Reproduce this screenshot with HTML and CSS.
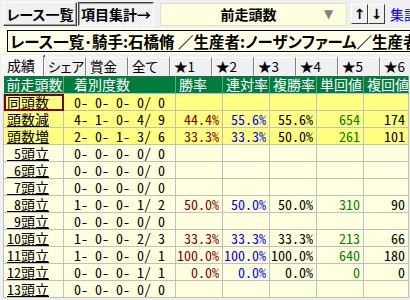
FILE: index.html
```html
<!DOCTYPE html>
<html lang="ja">
<head>
  <meta charset="UTF-8">
  <title>前走頭数 集計</title>
  <link rel="stylesheet" href="styles.css">
</head>
<body>

  <!-- toolbar -->
  <div class="toolbar">
    <button class="btn">レース一覧</button>
    <button class="btn toggled">項目集計→</button>
    <div class="combo">
      <span class="combo-text">前走頭数</span>
      <span class="combo-arrow">▼</span>
    </div>
    <div class="sort">
      <button class="arrow">↑</button>
      <button class="arrow">↓</button>
    </div>
    <a class="link" href="#">集計</a>
  </div>

  <!-- title -->
  <div class="titlebar">
    <div class="title">レース一覧･騎手:石橋脩 ／生産者:ノーザンファーム／生産者:ノーザンファーム</div>
  </div>

  <!-- tabs -->
  <div class="tabs">
    <div class="tab active">成績</div>
    <div class="tab">シェア</div>
    <div class="tab">賞金</div>
    <div class="tab">全て</div>
    <div class="tab">★1</div>
    <div class="tab">★2</div>
    <div class="tab">★3</div>
    <div class="tab">★4</div>
    <div class="tab">★5</div>
    <div class="tab">★6</div>
  </div>

  <!-- grid -->
  <div class="grid-wrap">
    <table class="grid">
      <colgroup>
        <col class="c-label"><col class="c-count"><col class="c-rate"><col class="c-rate"><col class="c-rate"><col class="c-rate"><col class="c-last">
      </colgroup>
      <thead>
        <tr>
          <th>前走頭数</th>
          <th class="pad">着別度数</th>
          <th>勝率</th>
          <th>連対率</th>
          <th>複勝率</th>
          <th>単回値</th>
          <th>複回値</th>
        </tr>
      </thead>
      <tbody>
        <tr class="hl">
          <td class="label selected"><span>同頭数</span></td>
          <td class="count">0- 0- 0- 0/ 0</td>
          <td></td><td></td><td></td><td></td><td></td>
        </tr>
        <tr class="hl">
          <td class="label"><span>頭数減</span></td>
          <td class="count">4- 1- 0- 4/ 9</td>
          <td class="win">44.4%</td><td class="ren">55.6%</td><td class="fuku">55.6%</td><td class="tan">654</td><td class="fk">174</td>
        </tr>
        <tr class="hl">
          <td class="label"><span>頭数増</span></td>
          <td class="count">2- 0- 1- 3/ 6</td>
          <td class="win">33.3%</td><td class="ren">33.3%</td><td class="fuku">50.0%</td><td class="tan">261</td><td class="fk">101</td>
        </tr>
        <tr>
          <td class="label"><span> 5頭立</span></td>
          <td class="count">0- 0- 0- 0/ 0</td>
          <td></td><td></td><td></td><td></td><td></td>
        </tr>
        <tr>
          <td class="label"><span> 6頭立</span></td>
          <td class="count">0- 0- 0- 0/ 0</td>
          <td></td><td></td><td></td><td></td><td></td>
        </tr>
        <tr>
          <td class="label"><span> 7頭立</span></td>
          <td class="count">0- 0- 0- 0/ 0</td>
          <td></td><td></td><td></td><td></td><td></td>
        </tr>
        <tr>
          <td class="label"><span> 8頭立</span></td>
          <td class="count">1- 0- 0- 1/ 2</td>
          <td class="win">50.0%</td><td class="ren">50.0%</td><td class="fuku">50.0%</td><td class="tan">310</td><td class="fk">90</td>
        </tr>
        <tr>
          <td class="label"><span> 9頭立</span></td>
          <td class="count">0- 0- 0- 0/ 0</td>
          <td></td><td></td><td></td><td></td><td></td>
        </tr>
        <tr>
          <td class="label"><span>10頭立</span></td>
          <td class="count">1- 0- 0- 2/ 3</td>
          <td class="win">33.3%</td><td class="ren">33.3%</td><td class="fuku">33.3%</td><td class="tan">213</td><td class="fk">66</td>
        </tr>
        <tr>
          <td class="label"><span>11頭立</span></td>
          <td class="count">1- 0- 0- 0/ 1</td>
          <td class="win">100.0%</td><td class="ren">100.0%</td><td class="fuku">100.0%</td><td class="tan">640</td><td class="fk">180</td>
        </tr>
        <tr>
          <td class="label"><span>12頭立</span></td>
          <td class="count">0- 0- 0- 1/ 1</td>
          <td class="win">0.0%</td><td class="ren">0.0%</td><td class="fuku">0.0%</td><td class="tan">0</td><td class="fk">0</td>
        </tr>
        <tr>
          <td class="label"><span>13頭立</span></td>
          <td class="count">0- 0- 0- 0/ 0</td>
          <td></td><td></td><td></td><td></td><td></td>
        </tr>
      </tbody>
    </table>
  </div>

</body>
</html>
```

FILE: styles.css
```css
body {
  margin: 0;
  width: 410px;
  height: 300px;
  overflow: hidden;
  background: #f0f0f0;
  font-family: "Noto Sans Mono CJK JP", "Noto Sans CJK JP", "Liberation Mono", monospace;
  font-size: 14px;
  color: #000;
}

/* toolbar */
.toolbar {
  display: flex;
  align-items: center;
  height: 28px;
  padding-left: 3px;
  white-space: nowrap;
}
.btn {
  flex: none;
  font-family: "Noto Sans CJK JP", sans-serif;
  font-feature-settings: "palt";
  font-size: 14px;
  font-weight: bold;
  width: 74px;
  height: 24px;
  padding: 0;
  background: #f0f0f0;
  border: 1px solid;
  border-color: #fff #404040 #404040 #fff;
  box-shadow: inset -1px -1px 0 #a0a0a0;
  line-height: 20px;
  white-space: nowrap;
}
.btn.toggled {
  width: 76px;
  margin-left: 1px;
  border-color: #404040 #fff #fff #404040;
  box-shadow: inset 1px 1px 0 #a0a0a0;
  background-color: #fff;
  background-image: repeating-conic-gradient(#e6e6e6 0 25%, #fff 0 50%);
  background-size: 2px 2px;
}
.combo {
  flex: none;
  display: flex;
  align-items: center;
  width: 185px;
  height: 21px;
  margin-left: 6px;
  background: #ffffe0;
  border: 1px solid #e0e0c8;
}
.combo-text {
  flex: 1;
  text-align: center;
  font-family: "Noto Sans CJK JP", sans-serif;
  font-weight: bold;
  font-size: 14px;
  padding-left: 12px;
}
.combo-arrow {
  color: #808080;
  font-family: "DejaVu Sans", sans-serif;
  font-size: 12px;
  width: 22px;
}
.sort {
  flex: none;
  display: flex;
  margin-left: 4px;
}
.arrow {
  width: 17px;
  height: 20px;
  padding: 0;
  font-family: "DejaVu Sans", sans-serif;
  font-size: 14px;
  font-weight: bold;
  background: #f0f0f0;
  border: 1px solid;
  border-color: #fff #404040 #404040 #fff;
}
.link {
  margin-left: 5px;
  color: #0000ff;
  font-family: "Noto Sans CJK JP", sans-serif;
  font-size: 14px;
  text-decoration: none;
}

/* title */
.titlebar {
  height: 26px;
  padding: 2px 0 0 7px;
  background: #ffffe8;
  box-sizing: border-box;
}
.title {
  height: 22px;
  border: 1px solid #000;
  border-right: none;
  padding-left: 2px;
  font-family: "Noto Sans CJK JP", sans-serif;
  font-feature-settings: "palt";
  font-size: 15.5px;
  font-weight: bold;
  line-height: 20px;
  white-space: nowrap;
  overflow: hidden;
  box-sizing: border-box;
}

/* tabs */
.tabs {
  display: flex;
  align-items: flex-end;
  height: 22px;
  padding-left: 2px;
  white-space: nowrap;
  overflow: hidden;
}
.tab {
  flex: none;
  width: 42px;
  height: 19px;
  padding-left: 3px;
  box-sizing: border-box;
  font-family: "Noto Sans CJK JP", sans-serif;
  font-feature-settings: "palt";
  font-size: 13.5px;
  line-height: 17px;
  background: #f0f0f0;
  border: 1px solid;
  border-color: #fff #808080 transparent #fff;
  box-shadow: 1px 0 0 #404040;
}
.tab.active {
  height: 21px;
  line-height: 19px;
  padding-left: 4px;
  font-size: 14px;
  background: #f8f8f8;
}

/* grid */
.grid-wrap {
  padding-left: 3px;
}
.grid {
  border-collapse: collapse;
  table-layout: fixed;
  width: 405px;
  background: #ffffe0;
}
.c-label { width: 60px; }
.c-count { width: 112px; }
.c-rate { width: 47px; }
.c-last { width: 45px; }

.grid th {
  height: 17px;
  padding: 0 0 0 3px;
  background: #007d3c;
  color: #fff;
  font-weight: normal;
  text-align: left;
  white-space: nowrap;
  border-right: 1px solid #60a880;
  line-height: 17px;
}
.grid th.pad {
  padding-left: 10px;
}
.grid td {
  height: 16px;
  padding: 0 3px 0 0;
  border: 1px solid #c0c0c0;
  text-align: right;
  white-space: pre;
  line-height: 16px;
  overflow: hidden;
}
.grid tr.hl td {
  background: #ffff80;
}
.grid td.label {
  text-align: left;
  padding-left: 3px;
}
.grid td.label span {
  text-decoration: underline;
}
.grid td.selected {
  outline: 2px solid #800000;
  outline-offset: -2px;
}
.grid td.count {
  text-align: left;
  padding-left: 10px;
}
.win { color: #800000; }
.ren { color: #0000ff; }
.fuku { color: #000; }
.tan { color: #008000; }
.fk { color: #000; }
```
